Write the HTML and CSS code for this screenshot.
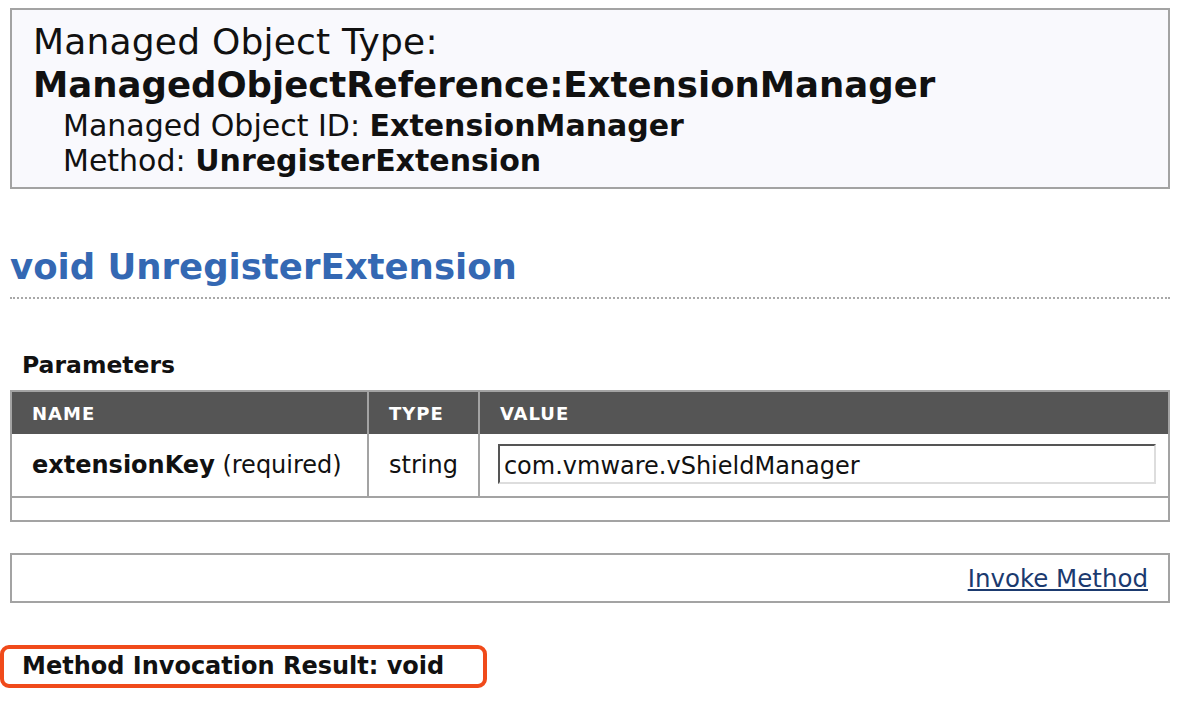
FILE: index.html
```html
<!DOCTYPE html>
<html>
<head>
<meta charset="utf-8">
<link rel="stylesheet" href="styles.css">
</head>
<body>
<div class="page">
  <div class="objbox">
    <div class="objtype">Managed Object Type:</div>
    <div class="objref">ManagedObjectReference:ExtensionManager</div>
    <div class="objline">Managed Object ID: <b>ExtensionManager</b></div>
    <div class="objline last">Method: <b>UnregisterExtension</b></div>
  </div>

  <h1 class="title">void UnregisterExtension</h1>

  <div class="section-label">Parameters</div>
  <table class="params">
    <thead>
      <tr>
        <th class="c-name">NAME</th>
        <th class="c-type">TYPE</th>
        <th class="c-value">VALUE</th>
      </tr>
    </thead>
    <tbody>
      <tr>
        <td class="c-name"><b>extensionKey</b> (required)</td>
        <td class="c-type">string</td>
        <td class="c-value"><input class="field" type="text" value="com.vmware.vShieldManager"></td>
      </tr>
      <tr class="empty"><td colspan="3"></td></tr>
    </tbody>
  </table>

  <div class="invoke"><a href="#" class="invoke-link">Invoke Method</a></div>

  <div class="result"><span class="result-text">Method Invocation Result: void</span></div>
</div>
</body>
</html>
```
FILE: styles.css
```css
html, body {
  margin: 0;
  padding: 0;
  background: #ffffff;
}
body {
  font-family: "DejaVu Sans", Verdana, sans-serif;
  color: #111;
}
.page {
  padding: 8px 10px 0 10px;
}
.objbox {
  border: 2px solid #a3a3a3;
  background: #f9f9fd;
  padding: 12px 20px 9px 21px;
}
.objtype {
  font-size: 36px;
  line-height: 40px;
  letter-spacing: 0.2px;
}
.objref {
  font-size: 35.5px;
  line-height: 46px;
  font-weight: bold;
}
.objline {
  font-size: 30px;
  line-height: 36px;
  padding-left: 30px;
}
.objline.last {
  line-height: 34px;
}
.title {
  margin: 56px 0 0 0;
  font-size: 35.5px;
  line-height: 44px;
  color: #3468b3;
  font-weight: bold;
  padding-bottom: 8px;
  border-bottom: 2px dotted #a8a8a8;
}
.section-label {
  margin: 51px 0 0 12px;
  font-size: 23.5px;
  font-weight: bold;
  line-height: 30px;
}
.params {
  margin-top: 10px;
  width: 100%;
  border-collapse: collapse;
  border: 2px solid #a3a3a3;
}
.params th {
  background: #555555;
  color: #fff;
  font-size: 18px;
  letter-spacing: 1px;
  font-weight: bold;
  text-align: left;
  height: 42px;
  padding: 0 20px;
  border-left: 2px solid #a3a3a3;
}
.params td {
  font-size: 24px;
  height: 62px;
  padding: 0 20px;
  border-left: 2px solid #a3a3a3;
  border-bottom: 2px solid #a3a3a3;
  vertical-align: middle;
}
.params .c-name { width: 315px; }
.params .c-type { width: 68px; }
.params td.c-value { padding-right: 10px; }
.params tr.empty td {
  height: 22px;
  border-bottom: none;
}
.field {
  display: block;
  box-sizing: border-box;
  width: 100%;
  height: 40px;
  margin: 0 0 2px -2px;
  font-family: "DejaVu Sans", Verdana, sans-serif;
  font-size: 24px;
  color: #111;
  padding: 4px 4px 0 4px;
  border-top: 2px solid #555;
  border-left: 2px solid #555;
  border-right: 2px solid #ddd;
  border-bottom: 2px solid #ddd;
  background: #fff;
}
.invoke {
  margin-top: 31px;
  border: 2px solid #a3a3a3;
  height: 46px;
  display: flex;
  justify-content: flex-end;
  align-items: center;
  padding-right: 20px;
}
.invoke-link {
  font-size: 24.5px;
  color: #1b3a6f;
  text-decoration: underline;
}
.result {
  margin: 42px 0 0 -10px;
}
.result-text {
  display: inline-block;
  font-size: 24px;
  font-weight: bold;
  line-height: 29px;
  padding: 3px 39px 3px 18px;
  border: 4px solid #f04a1a;
  border-radius: 9px;
}
```
